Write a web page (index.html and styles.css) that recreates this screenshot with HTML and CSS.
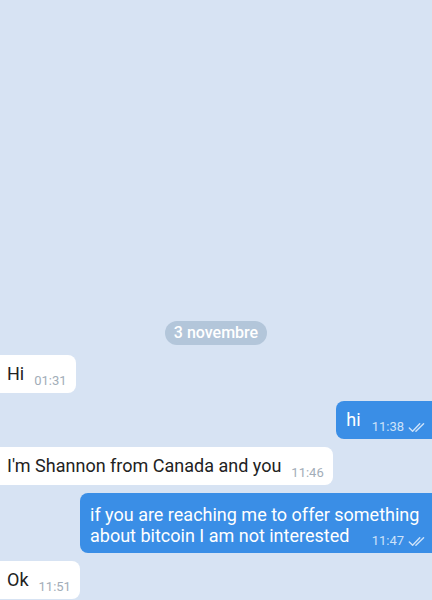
FILE: index.html
```html
<!DOCTYPE html>
<html>
<head>
<meta charset="utf-8">
<link rel="stylesheet" href="styles.css">
</head>
<body>
<div class="chat">
  <div class="date-row"><span class="date">3 novembre</span></div>
  <div class="row in"><div class="bubble">Hi<span class="time">01:31</span></div></div>
  <div class="row out"><div class="bubble">hi<span class="time">11:38<svg class="ticks" viewBox="0 0 16 10" width="18" height="11"><path d="M1 5.5 L4 8.5 L10.5 1.5 M7 8.5 L14 1.5" fill="none" stroke="currentColor" stroke-width="1.3" stroke-linecap="round" stroke-linejoin="round"/></svg></span></div></div>
  <div class="row in"><div class="bubble">I'm Shannon from Canada and you<span class="time">11:46</span></div></div>
  <div class="row out"><div class="bubble wide">if you are reaching me to offer something about bitcoin I am not interested<span class="time">11:47<svg class="ticks" viewBox="0 0 16 10" width="18" height="11"><path d="M1 5.5 L4 8.5 L10.5 1.5 M7 8.5 L14 1.5" fill="none" stroke="currentColor" stroke-width="1.3" stroke-linecap="round" stroke-linejoin="round"/></svg></span></div></div>
  <div class="row in"><div class="bubble">Ok<span class="time">11:51</span></div></div>
</div>
</body>
</html>
```
FILE: styles.css
```css
html, body {
  margin: 0;
  padding: 0;
}
body {
  background: #d7e3f3;
  font-family: Roboto, "Noto Sans", sans-serif;
  width: 432px;
  height: 600px;
  overflow: hidden;
}
.chat {
  height: 600px;
  display: flex;
  flex-direction: column;
  justify-content: flex-start;
  padding-top: 321px;
  box-sizing: border-box;
}
.date-row {
  display: flex;
  justify-content: center;
  margin-bottom: 10px;
}
.date {
  background: #b3c6da;
  color: #ffffff;
  font-size: 16px;
  font-weight: 500;
  line-height: 24px;
  height: 24px;
  padding: 0 9px;
  border-radius: 12px;
}
.row {
  display: flex;
  margin-bottom: 8px;
}
.row.in {
  justify-content: flex-start;
}
.row.out {
  justify-content: flex-end;
}
.bubble {
  font-size: 18px;
  line-height: 22px;
  color: #222222;
  padding: 8px 9px 8px 7px;
  background: #ffffff;
  border-radius: 0 8px 8px 0;
}
.row.out .bubble {
  background: #3a8ee6;
  color: #ffffff;
  border-radius: 8px 0 0 8px;
  padding-left: 10px;
  padding-right: 6px;
}
.bubble.wide {
  max-width: 336px;
  line-height: 21px;
  padding-top: 11px;
  padding-bottom: 7px;
}
.time {
  float: right;
  font-size: 13px;
  line-height: 22px;
  color: #a2adb8;
  margin-left: 10px;
  margin-top: 7px;
  margin-bottom: -7px;
  display: flex;
  align-items: center;
}
.row.out .time {
  color: #cde2f9;
  margin-left: 11px;
}
.bubble.wide .time {
  margin-top: 5px;
  margin-bottom: -6px;
}
.ticks {
  margin-left: 4px;
}
```
